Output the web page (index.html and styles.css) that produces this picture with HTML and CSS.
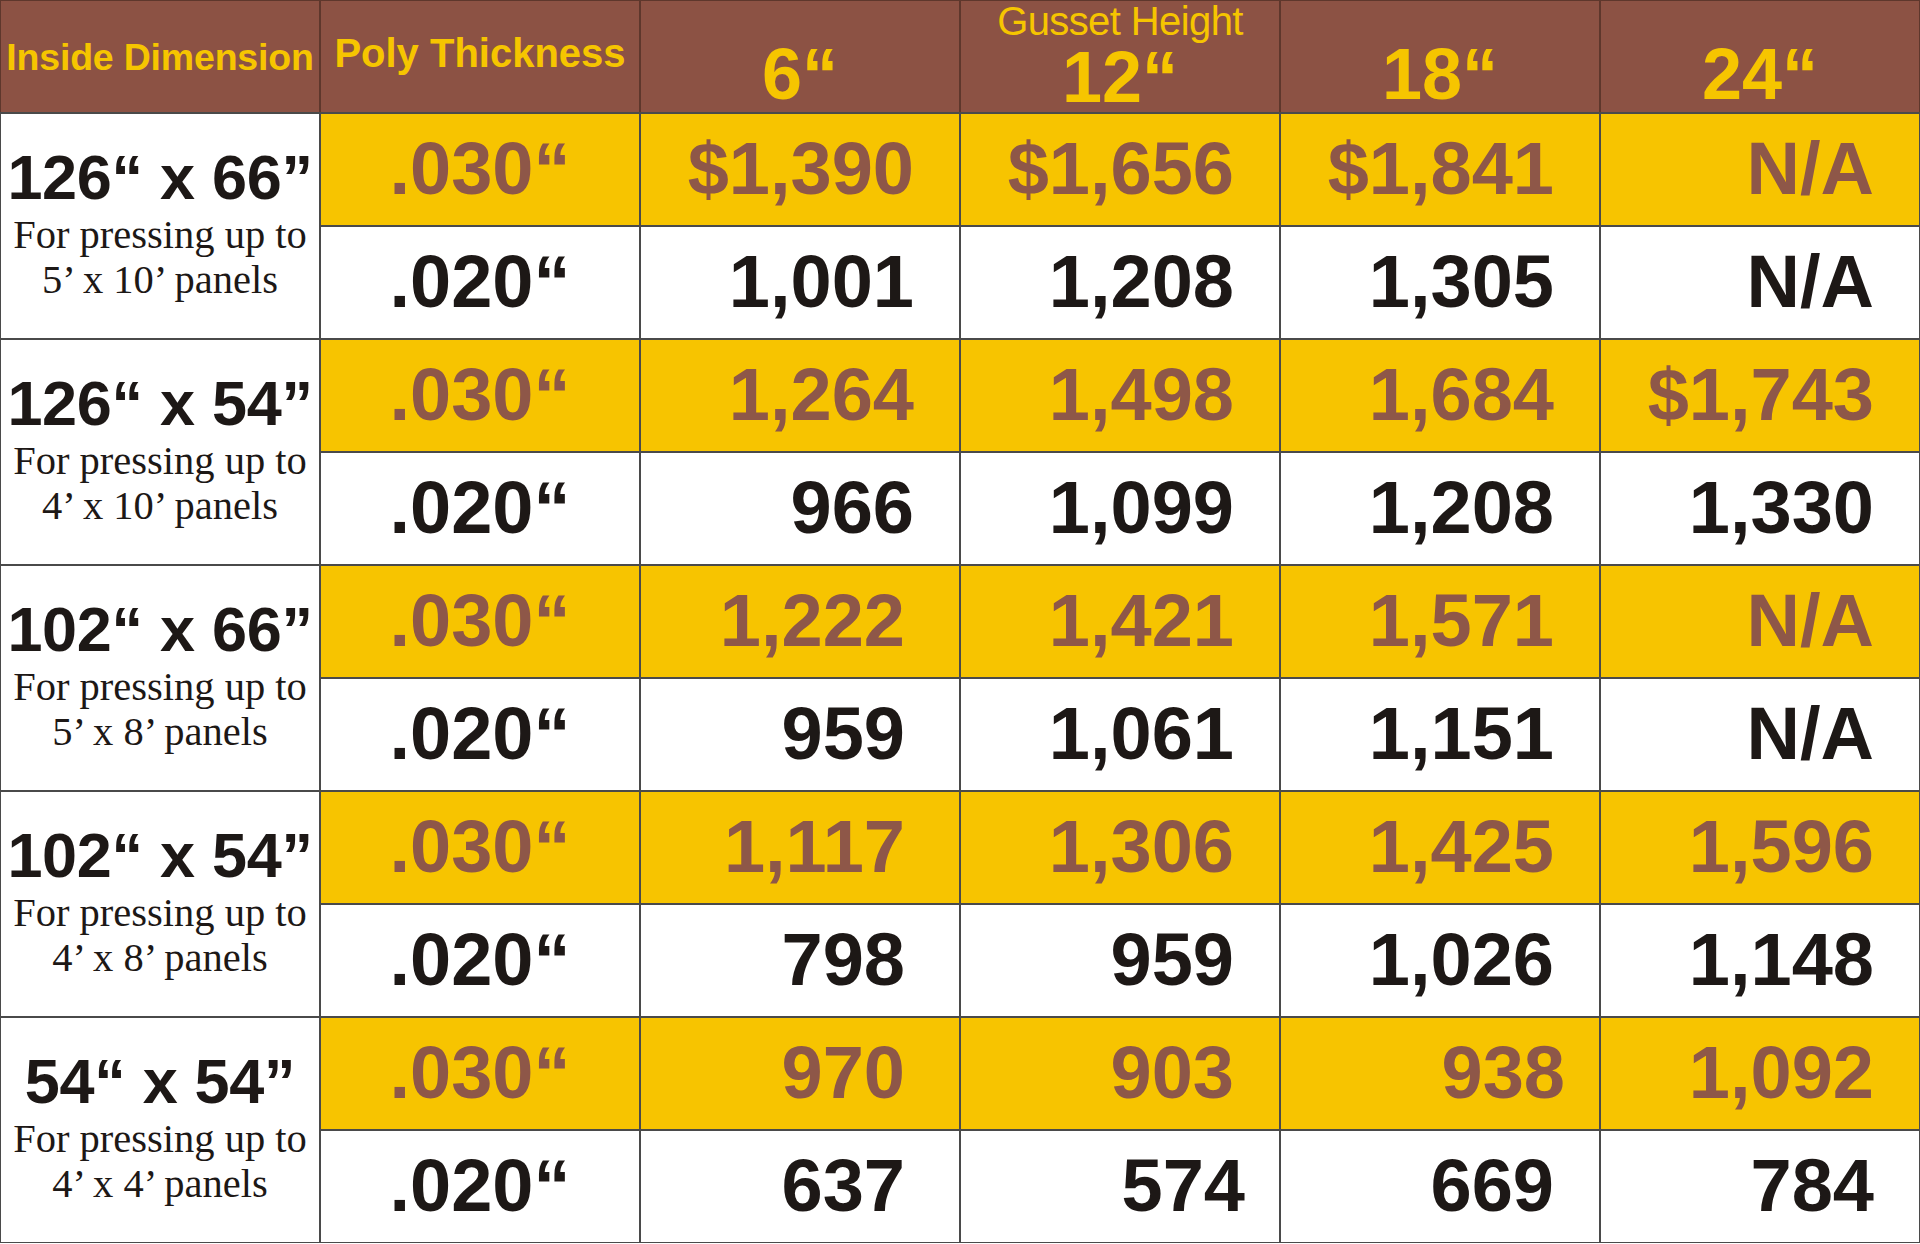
FILE: index.html
```html
<!DOCTYPE html>
<html lang="en">
<head>
<meta charset="utf-8">
<title>Press Bag Prices</title>
<link rel="stylesheet" href="styles.css">
</head>
<body>
<div class="sheet">
  <div class="hd hd-label">Inside Dimension</div>
  <div class="hd hd-poly">Poly Thickness</div>
  <div class="hd hd-size">6“</div>
  <div class="hd hd-size hd-gusset"><span class="gusset">Gusset Height</span><span>12“</span></div>
  <div class="hd hd-size">18“</div>
  <div class="hd hd-size">24“</div>

  <div class="label"><div class="dim">126“ x 66”</div><div class="note">For pressing up to<br>5’ x 10’ panels</div></div>
  <div class="poly y">.030“</div>
  <div class="val y">$1,390</div>
  <div class="val y">$1,656</div>
  <div class="val y">$1,841</div>
  <div class="val y">N/A</div>
  <div class="poly w">.020“</div>
  <div class="val w">1,001</div>
  <div class="val w">1,208</div>
  <div class="val w">1,305</div>
  <div class="val w">N/A</div>

  <div class="label"><div class="dim">126“ x 54”</div><div class="note">For pressing up to<br>4’ x 10’ panels</div></div>
  <div class="poly y">.030“</div>
  <div class="val y">1,264</div>
  <div class="val y">1,498</div>
  <div class="val y">1,684</div>
  <div class="val y">$1,743</div>
  <div class="poly w">.020“</div>
  <div class="val w">966</div>
  <div class="val w">1,099</div>
  <div class="val w">1,208</div>
  <div class="val w">1,330</div>

  <div class="label"><div class="dim">102“ x 66”</div><div class="note">For pressing up to<br>5’ x 8’ panels</div></div>
  <div class="poly y">.030“</div>
  <div class="val y in">1,222</div>
  <div class="val y">1,421</div>
  <div class="val y">1,571</div>
  <div class="val y">N/A</div>
  <div class="poly w">.020“</div>
  <div class="val w in">959</div>
  <div class="val w">1,061</div>
  <div class="val w">1,151</div>
  <div class="val w">N/A</div>

  <div class="label"><div class="dim">102“ x 54”</div><div class="note">For pressing up to<br>4’ x 8’ panels</div></div>
  <div class="poly y">.030“</div>
  <div class="val y in">1,117</div>
  <div class="val y">1,306</div>
  <div class="val y">1,425</div>
  <div class="val y">1,596</div>
  <div class="poly w">.020“</div>
  <div class="val w in">798</div>
  <div class="val w">959</div>
  <div class="val w">1,026</div>
  <div class="val w">1,148</div>

  <div class="label"><div class="dim">54“ x 54”</div><div class="note">For pressing up to<br>4’ x 4’ panels</div></div>
  <div class="poly y">.030“</div>
  <div class="val y in">970</div>
  <div class="val y">903</div>
  <div class="val y out">938</div>
  <div class="val y">1,092</div>
  <div class="poly w">.020“</div>
  <div class="val w in">637</div>
  <div class="val w out">574</div>
  <div class="val w">669</div>
  <div class="val w">784</div>
</div>
</body>
</html>
```

FILE: styles.css
```css
html, body {
  margin: 0;
  padding: 0;
  background: #ffffff;
}

.sheet {
  width: 1920px;
  box-sizing: border-box;
  padding: 1px;
  display: grid;
  grid-template-columns: repeat(6, 1fr);
  grid-template-rows: repeat(11, 111px);
  gap: 2px;
  background: linear-gradient(#5e372c 0 112px, #4a4a4a 112px);
  font-family: "Liberation Sans", Arial, sans-serif;
  font-weight: bold;
}

.hd {
  background: #8c5244;
  color: #f6c500;
  display: flex;
  justify-content: center;
  position: relative;
}

.hd-label {
  font-size: 37.5px;
  line-height: 1;
  align-items: flex-start;
  padding-top: 38px;
  box-sizing: border-box;
  letter-spacing: -0.2px;
}

.hd-poly {
  font-size: 40px;
  line-height: 1;
  align-items: flex-start;
  padding-top: 32px;
  box-sizing: border-box;
}

.hd-size {
  font-size: 72px;
  line-height: 1;
  align-items: flex-end;
  padding-bottom: 2px;
  box-sizing: border-box;
}

.hd-gusset {
  flex-direction: column;
  justify-content: space-between;
  align-items: center;
}

.gusset {
  font-size: 40px;
  font-weight: normal;
  line-height: 1;
  margin-top: 0;
  letter-spacing: -0.6px;
}

.label {
  grid-row: span 2;
  background: #ffffff;
  color: #1d1816;
  display: flex;
  flex-direction: column;
  justify-content: center;
  align-items: center;
  text-align: center;
  padding-bottom: 4px;
  box-sizing: border-box;
}

.dim {
  font-size: 63px;
  line-height: 1;
  letter-spacing: -0.3px;
  white-space: nowrap;
}

.note {
  font-family: "Liberation Serif", "Times New Roman", serif;
  font-weight: normal;
  font-size: 40.5px;
  line-height: 45px;
  margin-top: 3px;
}

.poly, .val {
  display: flex;
  align-items: center;
  font-size: 74px;
  line-height: 1;
  padding-bottom: 2px;
  box-sizing: border-box;
}

.poly {
  justify-content: center;
}

.val {
  justify-content: flex-end;
  padding-right: 45px;
}

.val.in {
  padding-right: 54px;
}

.val.out {
  padding-right: 34px;
}

.y {
  background: #f7c400;
  color: #8e5748;
}

.w {
  background: #ffffff;
  color: #1d1816;
}
```
